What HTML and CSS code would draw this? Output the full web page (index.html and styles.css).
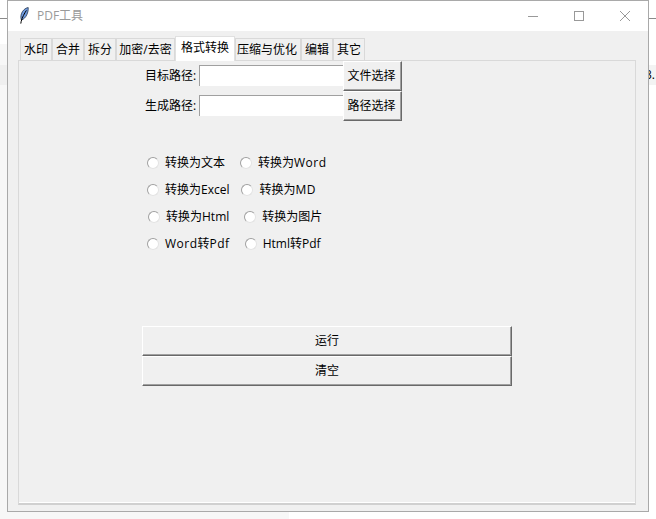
FILE: index.html
```html
<!DOCTYPE html>
<html lang="zh">
<head>
<meta charset="utf-8">
<title>PDF工具</title>
<link rel="stylesheet" href="styles.css">
</head>
<body>
<div class="desktop">
  <div class="bg-line bg-line-left"></div>
  <div class="bg-line bg-line-right"></div>
  <div class="bg-band bg-band-left"></div>
  <div class="bg-band bg-band-left-dark"></div>
  <div class="bg-band bg-band-bottom"></div>
  <div class="bg-band bg-band-right">3.</div>
  <div class="window">
    <header class="titlebar">
      <svg class="feather" width="12" height="18" viewBox="0 0 12 18" aria-hidden="true">
        <path d="M9.2 .5C6.2 1 3.4 3.6 2.4 6.8 1.7 9 1.7 11.2 2.4 13 4.6 12.4 6.6 10.4 7.8 7.8 8.9 5.4 9.4 2.8 9.2 .5Z" fill="#6f9be0" stroke="#26364f" stroke-width=".8"/>
        <path d="M7.4 3.4C5.4 6.4 3.2 10.4 2.2 14.4L1.8 16.6" fill="none" stroke="#000" stroke-width="1"/>
      </svg>
      <span class="title">PDF工具</span>
      <div class="controls">
        <span class="control"><svg width="12" height="12" viewBox="0 0 12 12"><path d="M1 6.5H11" stroke="#999" fill="none"/></svg></span>
        <span class="control"><svg width="12" height="12" viewBox="0 0 12 12"><rect x="1.5" y="1.5" width="9" height="9" stroke="#999" fill="none"/></svg></span>
        <span class="control"><svg width="12" height="12" viewBox="0 0 12 12"><path d="M1 1L11 11M11 1L1 11" stroke="#999" fill="none"/></svg></span>
      </div>
    </header>
    <main class="client">
      <nav class="tabs">
        <span class="tab">水印</span>
        <span class="tab">合并</span>
        <span class="tab">拆分</span>
        <span class="tab tab-crypt">加密/去密</span>
        <span class="tab tab-active">格式转换</span>
        <span class="tab tab-zip">压缩与优化</span>
        <span class="tab">编辑</span>
        <span class="tab">其它</span>
      </nav>
      <section class="pane">
        <div class="path-row">
          <label class="path-label">目标路径:</label>
          <input class="path-input" type="text">
          <button class="btn btn-small" type="button">文件选择</button>
        </div>
        <div class="path-row">
          <label class="path-label">生成路径:</label>
          <input class="path-input" type="text">
          <button class="btn btn-small" type="button">路径选择</button>
        </div>
        <div class="radios">
          <div class="radio-row row-1">
            <label class="radio"><input type="radio" name="fmt"><span>转换为文本</span></label>
            <label class="radio"><input type="radio" name="fmt"><span>转换为<span class="latin">Word</span></span></label>
          </div>
          <div class="radio-row row-2">
            <label class="radio"><input type="radio" name="fmt"><span>转换为Excel</span></label>
            <label class="radio"><input type="radio" name="fmt"><span>转换为<span class="latin">MD</span></span></label>
          </div>
          <div class="radio-row row-3">
            <label class="radio"><input type="radio" name="fmt"><span>转换为Html</span></label>
            <label class="radio"><input type="radio" name="fmt"><span>转换为图片</span></label>
          </div>
          <div class="radio-row row-4">
            <label class="radio"><input type="radio" name="fmt"><span><span class="latin">Word</span>转<span class="latin">Pdf</span></span></label>
            <label class="radio"><input type="radio" name="fmt"><span>Html转Pdf</span></label>
          </div>
        </div>
        <div class="actions">
          <button class="btn btn-wide" type="button">运行</button>
          <button class="btn btn-wide" type="button">清空</button>
        </div>
      </section>
    </main>
  </div>
</div>
</body>
</html>
```
FILE: styles.css
```css
* { box-sizing: border-box; }
html, body { margin: 0; padding: 0; }
body {
  width: 656px;
  height: 519px;
  overflow: hidden;
  background: #fff;
  font: 12px/16px "Open Sans", "Noto Sans CJK SC", sans-serif;
  color: #000;
}
.desktop { position: relative; width: 656px; height: 519px; overflow: hidden; padding-left: 7px; }

.bg-line { position: absolute; top: 18px; height: 1px; background: #8a8a8a; }
.bg-line-left { left: 0; width: 7px; }
.bg-line-right { left: 649px; width: 7px; }
.bg-band { position: absolute; background: #f7f7f7; }
.bg-band-left { left: 0; top: 44px; width: 7px; height: 475px; }
.bg-band-left-dark { left: 0; top: 65px; width: 7px; height: 20px; background: #efefef; }
.bg-band-bottom { left: 0; top: 512px; width: 289px; height: 7px; }
.bg-band-right { left: 649px; top: 65px; width: 7px; height: 20px; background: #f3f3f3; line-height: 20px; text-indent: -4px; overflow: visible; }

.window {
  position: relative;
  width: 642px;
  height: 512px;
  border: 1px solid #a9a9a9;
  background: #f0f0f0;
  display: flex;
  flex-direction: column;
}
.titlebar {
  height: 30px;
  flex: none;
  background: #fff;
  display: flex;
  align-items: center;
  padding-left: 11px;
}
.feather { flex: none; margin-top: -1px; }
.title { margin-left: 6px; color: #9a9a9a; }
.controls { margin-left: auto; display: flex; height: 100%; }
.control { width: 46px; display: flex; align-items: center; justify-content: center; margin-top: -1px; }
.control svg { display: block; }

.client { flex: 1; display: flex; flex-direction: column; padding: 5px 0 0 10px; }
.tabs { display: flex; align-items: flex-end; height: 24px; padding-left: 2px; position: relative; z-index: 1; }
.tab {
  height: 22px;
  width: 32px;
  border: 1px solid #d9d9d9;
  border-bottom: 0;
  line-height: 22px;
  background: #f0f0f0;
  white-space: nowrap;
  text-align: center;
}
.tab-crypt { width: 59px; }
.tab-zip { width: 66px; padding-right: 2px; }
.tab-active {
  width: 60px;
  height: 25px;
  margin-bottom: -1px;
  background: #fff;
  border-color: #e0e0e0;
}
.pane {
  width: 618px;
  height: 445px;
  border: 1px solid #d9d9d9;
  border-bottom: 2px solid;
  border-bottom-color: #d0d0d0;
  box-shadow: inset 0 -1px 0 #fff;
  background: #f0f0f0;
}
.path-row { display: flex; align-items: center; height: 30px; padding-left: 126px; }
.path-label { width: 51px; margin-right: 3px; white-space: nowrap; }
.path-input {
  width: 144px;
  height: 21px;
  margin: 0 0 1px;
  padding: 0;
  background: #fff;
  border: 0;
  border-top: 1px solid #a0a0a0;
  border-left: 1px solid #a0a0a0;
  outline: 0;
}
.btn {
  display: block;
  margin: 0;
  padding: 0;
  background: #f0f0f0;
  color: #000;
  font: inherit;
  border: 1px solid;
  border-color: #fff #696969 #696969 #fff;
  box-shadow: inset -1px -1px 0 #a0a0a0;
}
.btn-small { width: 59px; height: 30px; padding-right: 2px; }
.btn-wide { width: 370px; height: 30px; }

.radios { margin-top: 28px; }
.radio-row { display: flex; align-items: center; height: 27px; }
.radio { display: flex; align-items: center; gap: 6px; white-space: nowrap; }
.latin { letter-spacing: .5px; }
.radio input {
  appearance: none;
  -webkit-appearance: none;
  width: 12px;
  height: 12px;
  margin: 0;
  flex: none;
  border-radius: 50%;
  background: #fff;
  border: 1px solid;
  border-color: #a0a0a0 #e3e3e3 #e3e3e3 #a0a0a0;
}
.row-1 { padding-left: 128px; gap: 15px; }
.row-2 { padding-left: 128px; gap: 12px; }
.row-3 { padding-left: 129px; gap: 15px; }
.row-4 { padding-left: 128px; gap: 15px; }

.actions { margin-top: 69px; margin-left: 123px; }
```
